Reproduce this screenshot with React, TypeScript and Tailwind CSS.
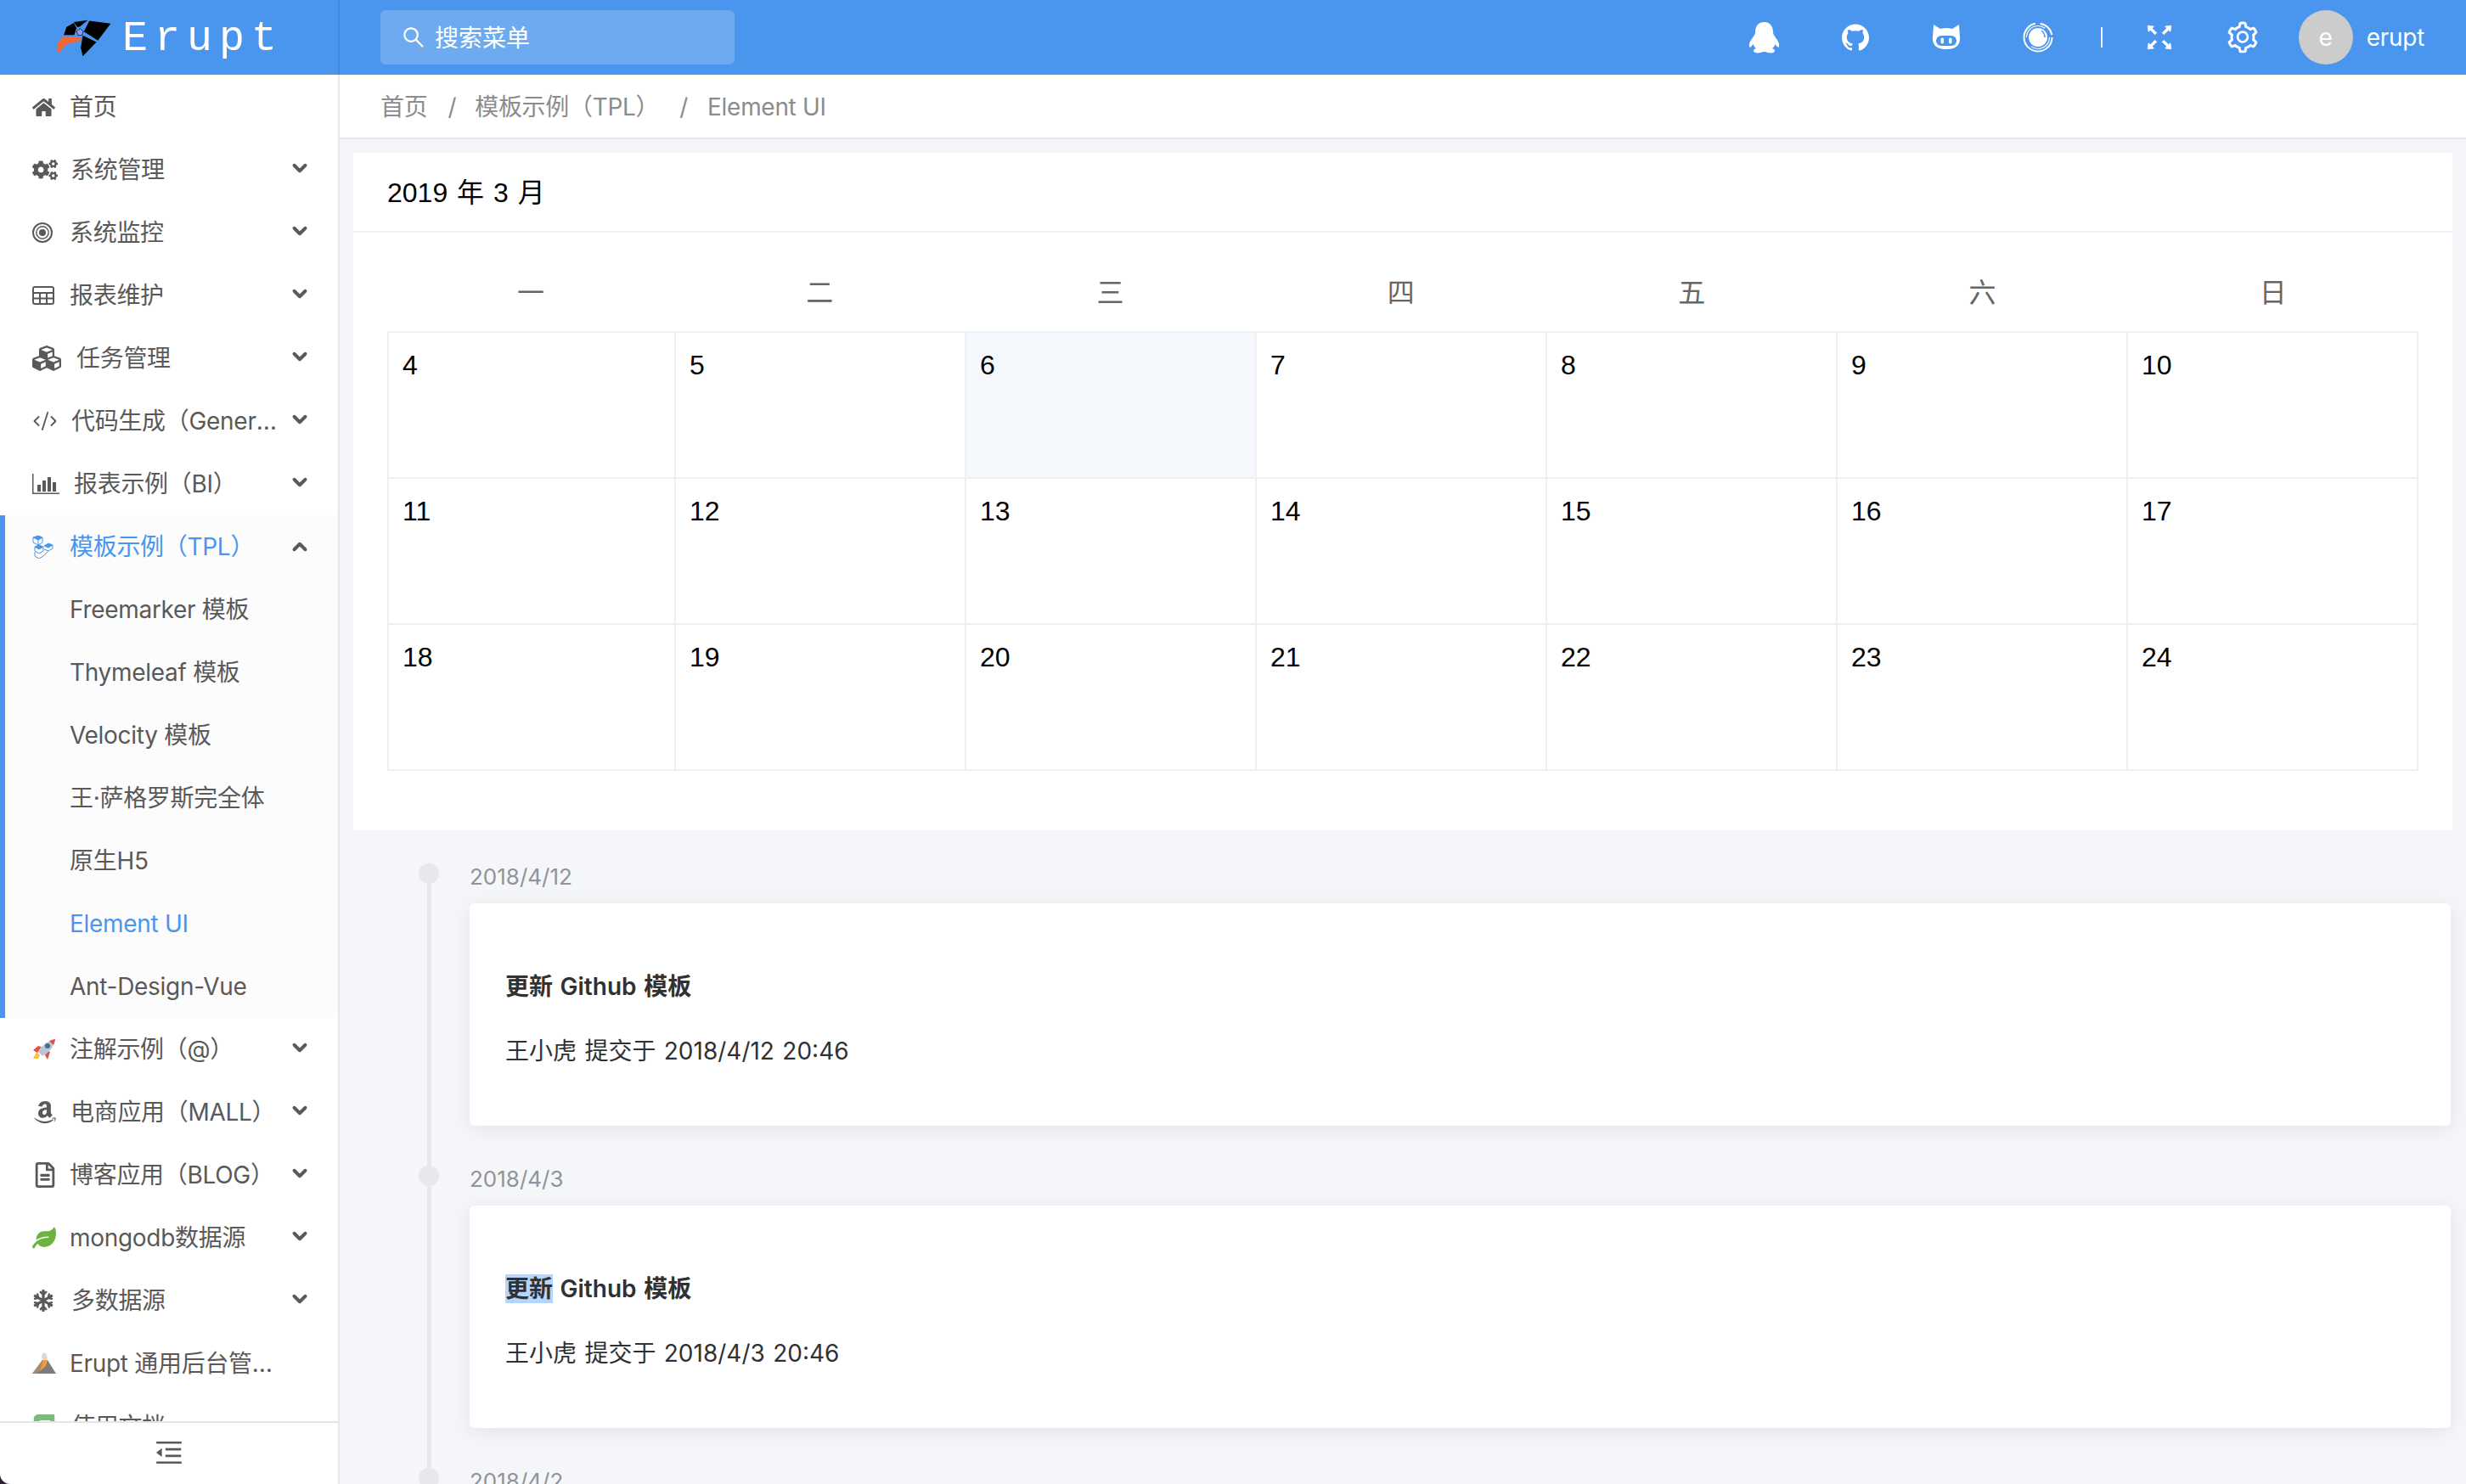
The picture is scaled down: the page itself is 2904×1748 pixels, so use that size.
import React from 'react';
import { ChevronDown, ChevronUp, CodeXml } from 'lucide-react';
import { AiOutlineFullscreen, AiOutlineMenuFold, AiOutlineSearch, AiOutlineSetting } from 'react-icons/ai';
import { FaAmazon, FaBook, FaCogs, FaCubes, FaHome, FaLeaf, FaRegFileAlt, FaSnowflake } from 'react-icons/fa';
import { SiGithub } from 'react-icons/si';

const cnSans = "font-[family-name:Inter,'Noto_Sans_CJK_SC',sans-serif]";
const cnArial = "font-[family-name:'Liberation_Sans','Noto_Sans_CJK_SC',sans-serif]";

function EruptLogo() {
    return (
        <svg width="67" height="47" viewBox="45 40 200 140">
            <polygon points="75,100 85,72 110,58 120,76 112,100" fill="#000" />
            <polygon points="110,55 160,48 130,72 122,72" fill="#000" />
            <polygon points="165,50 240,60 195,120 146,88" fill="#000" />
            <polygon points="142,102 190,125 142,175 135,145" fill="#000" />
            <path d="M50 150 Q50 122 75 105 L136 110 L130 126 Q92 126 75 142 L62 160 Q50 160 50 150Z" fill="#f0683a" />
            <polygon points="132,78 144,87 139,101 125,101 120,87" fill="#8f9be8" stroke="#000" strokeWidth="2" />
        </svg>
    );
}

function QqIcon() {
    return (
        <svg width="37" height="37" viewBox="0 0 37 37" fill="#fff">
            <path d="M18.5 0 C10 0 8 7 8 12 C8 14 7 15 6 17 C3 21 0 25 1 29 C2 31 4 28 5.5 26 C6 28 7.5 30 9 31 C6 32 5 34 7 35.5 C9 37 14 36.5 17 35 H20 C23 36.5 28 37 30 35.5 C32 34 31 32 28 31 C29.5 30 31 28 31.5 26 C33 28 35 31 36 29 C37 25 34 21 31 17 C30 15 29 14 29 12 C29 7 27 0 18.5 0Z" />
        </svg>
    );
}

function CatIcon() {
    return (
        <svg width="34" height="30" viewBox="0 0 34 30">
            <path d="M2 0 L10 5 Q17 3 24 5 L32 0 L33 15 Q34 29 17 29 Q0 29 1 15Z" fill="#fff" />
            <rect x="5" y="13" width="24" height="12" rx="6" fill="#4a95ed" />
            <rect x="10.5" y="15.5" width="3.5" height="7" rx="1.75" fill="#fff" />
            <rect x="20" y="15.5" width="3.5" height="7" rx="1.75" fill="#fff" />
        </svg>
    );
}

function SwirlIcon() {
    return (
        <svg width="36" height="38" viewBox="0 0 36 38">
            <circle cx="18" cy="19" r="16.5" fill="none" stroke="#fff" strokeWidth="2" strokeDasharray="74 6 20 4" />
            <circle cx="18" cy="19" r="13.5" fill="none" stroke="#fff" strokeWidth="1.2" strokeDasharray="30 12" />
            <circle cx="18" cy="19" r="11" fill="#fff" />
            <path d="M22 11 Q26 14 26 19" fill="none" stroke="#4a95ed" strokeWidth="1.5" />
        </svg>
    );
}

function TargetIcon() {
    return (
        <svg width="24" height="24" viewBox="0 0 24 24" fill="none" stroke="#595959">
            <circle cx="12" cy="12" r="11" strokeWidth="2" />
            <circle cx="12" cy="12" r="7.2" strokeWidth="1.4" />
            <circle cx="12" cy="12" r="4" fill="#595959" stroke="none" />
        </svg>
    );
}

function GridIcon() {
    return (
        <svg width="26" height="22" viewBox="0 0 26 22" fill="none" stroke="#595959" strokeWidth="2">
            <rect x="1" y="1" width="24" height="20" rx="2" />
            <path d="M1 8 H25 M1 14.5 H25 M9 8 V21 M17 8 V21" />
        </svg>
    );
}

function BarsIcon() {
    return (
        <svg width="32" height="24" viewBox="0 0 32 24" fill="#595959">
            <rect x="0" y="0" width="1.5" height="24" />
            <rect x="0" y="22.5" width="32" height="1.5" />
            <rect x="6" y="13" width="4" height="8" />
            <rect x="12" y="8" width="4" height="13" />
            <rect x="18" y="4" width="4" height="17" />
            <rect x="24" y="10" width="4" height="11" />
        </svg>
    );
}

function StackIcon() {
    return (
        <svg width="25" height="28" viewBox="0 0 25 28" fill="none" stroke="#4a95ed" strokeWidth="1">
            <path d="M1 3 L7 1 L12 3 L7 6Z" fill="#4a95ed" />
            <path d="M1 3 V9 L7 12 L12 9 V3 M7 6 V12" />
            <path d="M3 14 L8 12 L13 14 L8 17Z" fill="#4a95ed" />
            <path d="M3 14 V19 L8 22 L13 19 V14" />
            <path d="M14 13 L19 10 L24 12 L19 15Z" fill="#4a95ed" />
            <path d="M24 12 V16 L19 19 L14 17 M3 20 V25 L8 28 L13 25 L19 19" />
        </svg>
    );
}

function RocketIcon() {
    return (
        <svg width="28" height="26" viewBox="0 0 28 26">
            <path d="M1 24 L5 16 L9 20 L7 24Z" fill="#f7c244" />
            <path d="M1 14 L7 9 L11 10 L6 17Z" fill="#e2504a" />
            <path d="M15 20 L18 25 L21 16 L17 15Z" fill="#e2504a" />
            <path d="M7 16 Q13 4 27 1 Q25 14 12 21Z" fill="#b9c6d4" />
            <path d="M20 3 Q25 1 27 1 Q27 4 25 8Z" fill="#e2504a" />
            <circle cx="18" cy="9" r="3" fill="#4d6a8a" />
        </svg>
    );
}

function VolcanoIcon() {
    return (
        <svg width="28" height="26" viewBox="0 0 28 26">
            <path d="M13 0 Q18 1 17 5 Q19 6 17 9 H13 Q9 5 13 0Z" fill="#d8d8d8" />
            <path d="M0 25 L12 9 H18 L28 25Z" fill="#7c7c7c" />
            <path d="M12 9 H18 L14 18 L5 25 H0Z" fill="#a98a6a" />
            <path d="M13 9 H18 L16 16 L9 22Z" fill="#f39b3c" />
        </svg>
    );
}

interface NavItem {
    label: string;
    icon?: React.ReactNode;
    labelClass?: string;
    arrow?: boolean;
}

const itemsTop: NavItem[] = [
    { label: '首页', icon: <FaHome size={27} /> },
    { label: '系统管理', icon: <FaCogs size={30} />, labelClass: 'ml-[1px]', arrow: true },
    { label: '系统监控', icon: <TargetIcon />, arrow: true },
    { label: '报表维护', icon: <GridIcon />, arrow: true },
    { label: '任务管理', icon: <FaCubes size={34} />, labelClass: 'ml-[8px]', arrow: true },
    { label: '代码生成（Generator）', icon: <CodeXml size={30} strokeWidth={1.5} />, labelClass: 'ml-[2px]', arrow: true },
    { label: '报表示例（BI）', icon: <BarsIcon />, labelClass: 'ml-[5px]', arrow: true },
];

const itemsChildren = ['Freemarker 模板', 'Thymeleaf 模板', 'Velocity 模板', '王·萨格罗斯完全体', '原生H5', 'Element UI', 'Ant-Design-Vue'];

const itemsBottom: NavItem[] = [
    { label: '注解示例（@）', icon: <RocketIcon />, arrow: true },
    { label: '电商应用（MALL）', icon: <FaAmazon size={30} />, labelClass: 'ml-[1px]', arrow: true },
    { label: '博客应用（BLOG）', icon: <FaRegFileAlt size={30} />, arrow: true },
    { label: 'mongodb数据源', icon: <FaLeaf size={28} className="text-[#6cb33f]" />, arrow: true },
    { label: '多数据源', icon: <FaSnowflake size={26} />, labelClass: 'ml-[2px]', arrow: true },
    { label: 'Erupt 通用后台管理框架', icon: <VolcanoIcon /> },
    { label: '使用文档', icon: <FaBook size={28} className="text-[#7dbb7d]" />, labelClass: 'ml-[2px]' },
];

function Row({ label, icon, labelClass, arrow }: NavItem) {
    return (
        <div className="h-[74px] flex items-center pl-[38px] pr-[30px] text-[28px] tracking-[-0.3px] text-[#595959]">
            <span className="w-[44px] shrink-0 flex items-center">{icon}</span>
            <span className={`flex-1 min-w-0 truncate ${labelClass ?? ''}`}>{label}</span>
            <span className="w-[30px] shrink-0 -mt-[4px] flex justify-center">
                {arrow && <ChevronDown size={26} strokeWidth={3.6} />}
            </span>
        </div>
    );
}

function Sidebar() {
    return (
        <div className="w-[400px] shrink-0 bg-[#2a2233]">
            <div className="h-full flex flex-col bg-white border-r-2 border-[#e8e6ea] rounded-bl-[12px] overflow-hidden">
                <div className="flex-1 min-h-0 overflow-hidden pt-px">
                    {itemsTop.map((item) => <Row key={item.label} {...item} />)}
                    <div className="bg-[#fcfcfd] border-l-[6px] border-[#4a95ed]">
                        <div className="h-[74px] flex items-center pl-[32px] pr-[30px] text-[28px] tracking-[-0.3px] text-[#4a95ed]">
                            <span className="w-[44px] shrink-0"><StackIcon /></span>
                            <span className="flex-1">模板示例（TPL）</span>
                            <span className="w-[30px] shrink-0 flex justify-center text-[#595959]"><ChevronUp size={26} strokeWidth={3.6} /></span>
                        </div>
                        {itemsChildren.map((name) => (
                            <div key={name} className={`h-[74px] flex items-center pl-[76px] text-[28px] tracking-[-0.3px] ${name === 'Element UI' ? 'text-[#4a95ed]' : 'text-[#595959]'}`}>
                                {name}
                            </div>
                        ))}
                    </div>
                    {itemsBottom.map((item) => <Row key={item.label} {...item} />)}
                </div>
                <div className="h-[74px] shrink-0 flex items-center justify-center pb-[2px] border-t-2 border-[#e4e4e8] text-[#595959]">
                    <AiOutlineMenuFold size={38} />
                </div>
            </div>
        </div>
    );
}

function Header() {
    return (
        <div className="h-[88px] shrink-0 flex items-center bg-[#4a95ed] text-white">
            <div className="w-[400px] h-full shrink-0 flex items-center pl-[65px] border-r-2 border-[#4489dc]">
                <EruptLogo />
                <span className="ml-[12px] pt-[3px] font-[family-name:'Liberation_Mono',monospace] text-[50px] leading-none tracking-[8px]">Erupt</span>
            </div>
            <div className="ml-[48px] w-[417px] h-[64px] flex items-center pl-[24px] rounded-[6px] bg-white/20 text-[28px]">
                <AiOutlineSearch size={30} />
                <span className="ml-[10px] pt-[2px]">搜索菜单</span>
            </div>
            <div className="flex-1" />
            <div className="w-[38px] flex justify-center"><QqIcon /></div>
            <div className="ml-[72px] w-[32px] flex justify-center"><SiGithub size={32} /></div>
            <div className="ml-[74px] w-[34px] flex justify-center"><CatIcon /></div>
            <div className="ml-[73px] w-[36px] flex justify-center"><SwirlIcon /></div>
            <div className="ml-[56px] w-[2px] h-[24px] bg-white/90" />
            <div className="ml-[47px] w-[40px] flex justify-center"><AiOutlineFullscreen size={40} stroke="currentColor" strokeWidth={20} /></div>
            <div className="ml-[57px] w-[42px] flex justify-center"><AiOutlineSetting size={42} /></div>
            <div className="ml-[45px] w-[64px] h-[64px] rounded-full bg-[#cccccc] flex items-center justify-center text-[28px]">e</div>
            <span className="ml-[16px] mr-[49px] text-[28px] tracking-[-0.3px]">erupt</span>
        </div>
    );
}

function Breadcrumb() {
    return (
        <div className="h-[76px] shrink-0 flex items-center pl-[48px] pt-[2px] bg-white border-b-2 border-[#e8e8ec] text-[28px] tracking-[-0.3px] text-[#8c8c8c]">
            <span>首页</span>
            <span className="ml-[24px]">/</span>
            <span className="ml-[22px]">模板示例（TPL）</span>
            <span className="ml-[24px]">/</span>
            <span className="ml-[23px]">Element UI</span>
        </div>
    );
}

const weekDays = ['一', '二', '三', '四', '五', '六', '日'];
const weeks = [[4, 5, 6, 7, 8, 9, 10], [11, 12, 13, 14, 15, 16, 17], [18, 19, 20, 21, 22, 23, 24]];

function Calendar() {
    return (
        <div className={`ml-[16px] mr-[16px] mt-[16px] bg-white ${cnArial}`}>
            <div className="h-[94px] flex items-center pl-[40px] pt-[2px] border-b-2 border-[#eef0f4] text-[32px] [word-spacing:2px] text-black">
                2019 年 3 月
            </div>
            <div className="px-[40px] pb-[70px]">
                <div className="grid grid-cols-[338px_repeat(6,1fr)] h-[116px] items-center pt-[26px]">
                    {weekDays.map((d) => (
                        <div key={d} className="text-center text-[32px] text-[#666666]">{d}</div>
                    ))}
                </div>
                <div className="grid grid-cols-[338px_repeat(6,1fr)] border-t-2 border-l-2 border-[#eeeff3]">
                    {weeks.flat().map((day) => (
                        <div key={day} className={`h-[172px] border-r-2 border-b-2 border-[#eeeff3] pl-[16px] pt-[20px] text-[32px] leading-[36px] text-black ${day === 6 ? 'bg-[#f4f7fb]' : ''}`}>
                            {day}
                        </div>
                    ))}
                </div>
            </div>
        </div>
    );
}

const commits = [
    { date: '2018/4/12', selected: false },
    { date: '2018/4/3', selected: true },
    { date: '2018/4/2', selected: false },
];

function Timeline() {
    return (
        <div className="pl-[93px] pr-[18px] pt-[39px]">
            {commits.map(({ date, selected }) => (
                <div key={date} className="flex h-[356px]">
                    <div className="w-[24px] shrink-0 flex flex-col items-center">
                        <div className="w-[24px] h-[24px] shrink-0 rounded-full bg-[#e6e8ed]" />
                        <div className="w-[5px] flex-1 bg-[#e6e8ed]" />
                    </div>
                    <div className="flex-1 min-w-0 ml-[36px]">
                        <div className="h-[32px] leading-[32px] text-[26px] text-[#909399]">{date}</div>
                        <div className="mt-[15px] h-[262px] pl-[42px] pt-[78px] rounded-[6px] bg-white shadow-[0_4px_24px_rgba(0,0,0,0.08)] text-[28px] [word-spacing:1.5px] text-[#303133]">
                            <div className="h-[40px] leading-[40px] font-semibold">
                                <span className={selected ? 'bg-[#b4d5fe]' : ''}>更新</span> Github 模板
                            </div>
                            <div className="mt-[36px] h-[40px] leading-[40px]">王小虎 提交于 {date} 20:46</div>
                        </div>
                    </div>
                </div>
            ))}
        </div>
    );
}

function App() {
    return (
        <div className={`w-full h-screen flex flex-col overflow-hidden ${cnSans}`}>
            <Header />
            <div className="flex-1 min-h-0 flex">
                <Sidebar />
                <div className="flex-1 min-w-0 flex flex-col overflow-hidden bg-[#f5f6fa]">
                    <Breadcrumb />
                    <div className="flex-1 min-h-0 overflow-hidden">
                        <Calendar />
                        <Timeline />
                    </div>
                </div>
            </div>
        </div>
    );
}

export default App;
